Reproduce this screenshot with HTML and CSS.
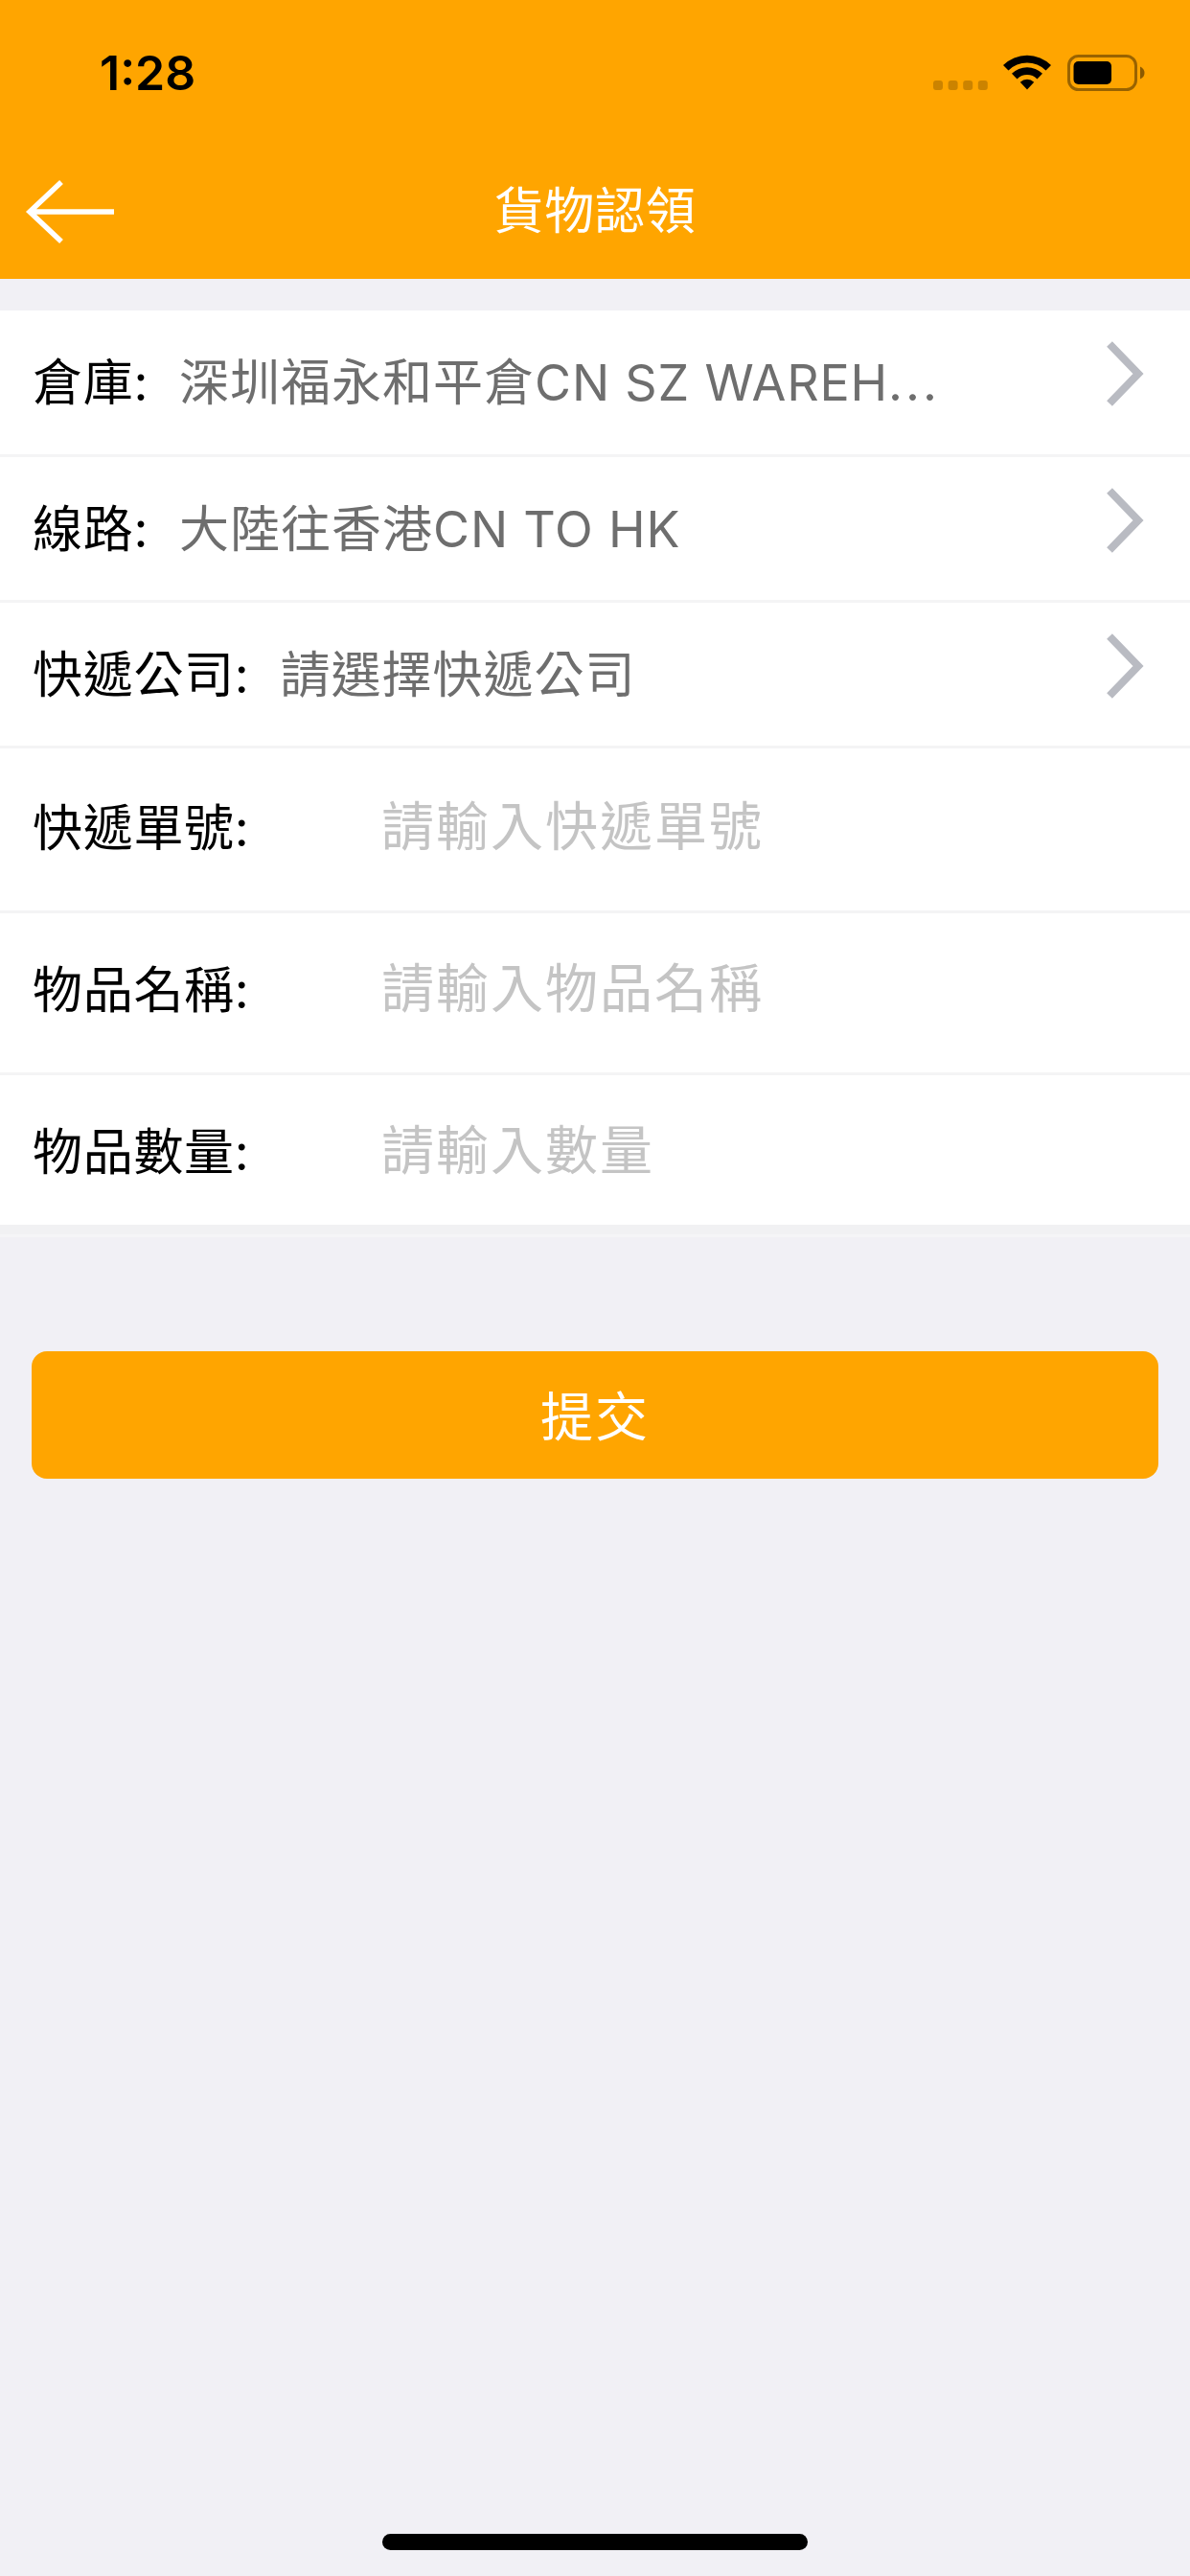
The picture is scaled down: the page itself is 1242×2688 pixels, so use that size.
FILE: index.html
```html
<!DOCTYPE html>
<html lang="zh-Hant">
<head>
  <meta charset="UTF-8">
  <title>貨物認領</title>
  <meta name="viewport" content="width=device-width, initial-scale=1.0">
  <link rel="stylesheet" href="styles.css">
</head>
<body>
  <header class="header">
    <div class="status">
      <span class="time">1:28</span>
      <div class="status-icons">
        <svg class="dots" width="58" height="10" viewBox="0 0 58 10">
          <rect x="0" width="10" height="10" rx="3"/><rect x="15.6" width="10" height="10" rx="3"/>
          <rect x="31.2" width="10" height="10" rx="3"/><rect x="46.8" width="10" height="10" rx="3"/>
        </svg>
        <svg class="wifi" width="50" height="37" viewBox="0 0 50 37">
          <path d="M0 11A35.5 35.5 0 0 1 50 11L44.5 16.5A27.7 27.7 0 0 0 5.5 16.5Z"/>
          <path d="M9 19.8A22.8 22.8 0 0 1 41 19.8L35.5 25.4A15 15 0 0 0 14.5 25.4Z"/>
          <path d="M17.8 28.8A10.3 10.3 0 0 1 32.2 28.8L25 36.5Z"/>
        </svg>
        <svg class="battery" width="81" height="38" viewBox="0 0 81 38">
          <rect class="shell" x="1.5" y="1.5" width="70" height="35" rx="10"/>
          <rect x="6.5" y="7" width="39.5" height="24" rx="5"/>
          <path class="knob" d="M76 12.5Q80.5 14.5 80.5 19T76 25.5Z"/>
        </svg>
      </div>
    </div>
    <nav class="navbar">
      <svg class="back" width="94" height="68" viewBox="0 0 94 68">
        <path d="M93 34H5M38 3L5 34L38 65"/>
      </svg>
      <h1>貨物認領</h1>
    </nav>
  </header>

  <form class="form" autocomplete="off">
    <div class="row pick first">
      <span class="label">倉庫:</span>
      <span class="value">深圳福永和平倉<span class="latin">CN SZ WAREH<span class="more">...</span></span></span>
      <svg class="chevron" width="40" height="68" viewBox="0 0 40 68"><path d="M4 3L34 34L4 65"/></svg>
    </div>
    <div class="row pick">
      <span class="label">線路:</span>
      <span class="value">大陸往香港<span class="latin">CN TO HK</span></span>
      <svg class="chevron" width="40" height="68" viewBox="0 0 40 68"><path d="M4 3L34 34L4 65"/></svg>
    </div>
    <div class="row pick">
      <span class="label">快遞公司:</span>
      <span class="value">請選擇快遞公司</span>
      <svg class="chevron" width="40" height="68" viewBox="0 0 40 68"><path d="M4 3L34 34L4 65"/></svg>
    </div>
    <div class="row field number">
      <label class="label" for="trackNo">快遞單號:</label>
      <input id="trackNo" type="text" placeholder="請輸入快遞單號">
    </div>
    <div class="row field name">
      <label class="label" for="itemName">物品名稱:</label>
      <input id="itemName" type="text" placeholder="請輸入物品名稱">
    </div>
    <div class="row field amount">
      <label class="label" for="itemCount">物品數量:</label>
      <input id="itemCount" type="text" placeholder="請輸入數量">
    </div>
    <div class="form-end"></div>
    <button class="submit" type="submit">提交</button>
  </form>

  <div class="home-bar"></div>
</body>
</html>
```
FILE: styles.css
```css
*{box-sizing:border-box}
body{margin:0;height:2688px;display:flex;flex-direction:column;background:#f1f0f5;
     font-family:Inter,"Noto Sans CJK TC",sans-serif;font-size:52px;color:#000}
svg{display:block;flex:none}

/* status bar + title */
.header{height:291px;background:#ffa500}
.status{height:150px;display:flex;justify-content:space-between;padding:0 47px 0 104px}
.time{padding-top:46px;font-size:50px;line-height:60px;font-weight:600}
.status-icons{display:flex;align-items:flex-end;height:95px}
.dots{margin:0 15px 1px 0;opacity:.2}
.wifi{margin:0 17px 1px 0}
.shell{fill:none;stroke:#000;stroke-width:3;opacity:.4}
.knob{opacity:.45}

.navbar{height:141px;display:grid;grid-template-columns:120px 1fr 120px;align-items:center}
.back{margin-left:26px;fill:none;stroke:#fff;stroke-width:5.5}
h1{margin:0;font-size:52px;font-weight:400;line-height:76px;letter-spacing:.8px;color:#fff;text-align:center}

/* rows */
.form{flex:1;padding-top:33px}
.row{display:flex;align-items:flex-start;height:152px;padding:0 48px 0 34px;background:#fff;
     border-bottom:3px solid #f4f4f5;line-height:76px}
.row.first{height:153px}
.label,.value{letter-spacing:1px;white-space:nowrap}
.label{flex:none;letter-spacing:.7px}
.pick .label,.pick .value{padding-top:38px}
.pick .label{margin-right:32px}
.value{flex:1;color:#6e6e6e}
.latin{letter-spacing:.8px}
.more{letter-spacing:3px}
.chevron{margin-top:32px;fill:none;stroke:#b9bbc2;stroke-width:8}

.field .label{width:364px}
.field input{flex:1;min-width:0;height:80px;margin-top:-5px;padding:0;border:0;outline:0;background:none;
             font:inherit;font-size:55px;letter-spacing:2px;color:#000}
.field input::placeholder{color:#c4c4c4;opacity:1}
.number{height:172px;padding-top:46px}
.name{height:169px;padding-top:43px}
.amount{height:156px;padding-top:43px;border:0}

.form-end{height:13px;background:#f1f1f3;border-bottom:3px solid #f5f5f7}
.submit{display:block;width:1176px;height:133px;margin:119px auto 0;padding:0 0 6px;border:0;border-radius:16px;
        background:#ffa500;color:#fff;font:inherit;font-size:55px;letter-spacing:2px}

.home-bar{width:444px;height:17px;margin:0 auto 27px;border-radius:9px;background:#000}
```
